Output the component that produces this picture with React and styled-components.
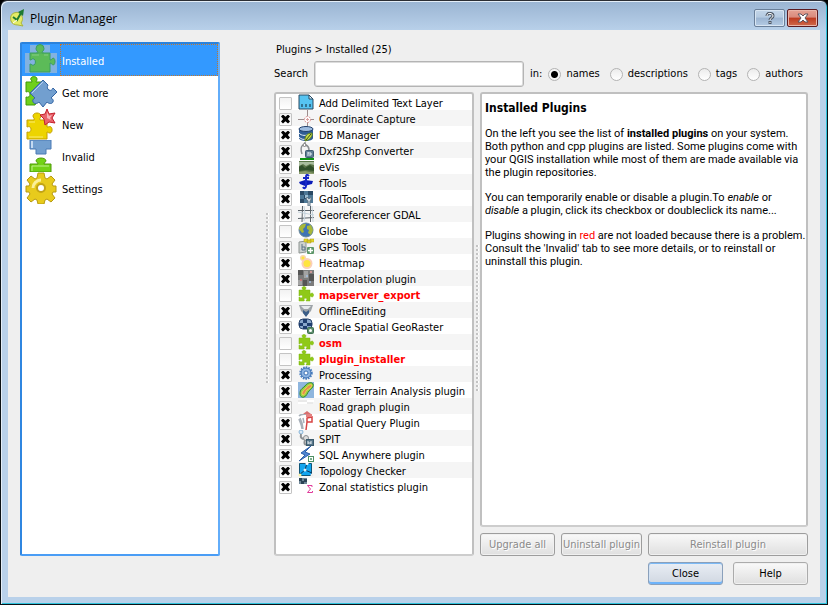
import React, { useState } from "react";
import styled, { createGlobalStyle, css } from "styled-components";

const ui = `"DejaVu Sans Condensed", "DejaVu Sans", sans-serif`;

const GlobalStyle = createGlobalStyle`
  * { box-sizing: border-box; }
  body { margin: 0; background: #000; color: #000; font: 11px/16px ${ui}; }
  button, input { font: inherit; color: inherit; }
`;

const Window = styled.div`
  min-height: 100vh;
  display: flex;
  flex-direction: column;
  padding: 0 7px 7px;
  border: 1px solid #0b1116;
  border-top-color: #2b2d33;
  border-radius: 7px 7px 0 0;
  background: linear-gradient(#9ab4d2, #b9d1ea 30px);
  box-shadow: inset 1px 1px 0 #e4eef8, inset -1px -1px 0 #2fc3dc;
`;

const TitleBar = styled.header`
  height: 29px;
  display: flex;
  align-items: center;
  gap: 5px;
  padding: 5px 2px 0 1px;
`;

const Title = styled.h1`
  flex: 1;
  margin: 0;
  padding-top: 2px;
  font: 12px/18px "Open Sans", sans-serif;
`;

const CaptionButton = styled.button`
  width: 31px;
  height: 18px;
  margin-left: -3px;
  padding: 0;
  display: grid;
  place-items: center;
  border: 1px solid ${(p) => (p.$danger ? "#5b1a20" : "#6a7f99")};
  border-radius: 2px;
  background: ${(p) =>
    p.$danger
      ? "linear-gradient(#e5a294, #d98a7c 45%, #bd3a20 50%, #cf6a4c)"
      : "linear-gradient(#c3d5e8, #b5cae1 45%, #9bb4d1 50%, #b4cbe4)"};
  box-shadow: inset 0 0 0 1px ${(p) => (p.$danger ? "#eab5a9" : "#d8e5f2")};
`;

const Client = styled.main`
  flex: 1;
  display: flex;
  padding: 12px;
  background: #efefef;
`;

const Sidebar = styled.nav`
  flex: 0 0 200px;
  margin-bottom: 29px;
  border: 2px solid #4a9df5;
  border-top-color: #2a82dc;
  border-left-color: #2f86e0;
  border-right-color: #62adfa;
  border-radius: 2px;
  background: #fff;
`;

const SidebarItem = styled.button`
  width: 100%;
  height: 32px;
  display: flex;
  align-items: center;
  gap: 3px;
  padding: 0 0 0 3px;
  border: 0;
  background: none;
  text-align: left;
  svg { flex: none; }
  ${(p) =>
    p.$active &&
    css`
      background: #3399ff;
      color: #fff;
    `}
`;

const SidebarLabel = styled.span`
  align-self: stretch;
  flex: 1;
  display: flex;
  align-items: center;
  padding: 4px 1px 0;
  border: 1px dotted ${(p) => (p.$active ? "#c2772c" : "transparent")};
`;

const Splitter = styled.div`
  flex: 0 0 ${(p) => p.$size}px;
  align-self: center;
  height: ${(p) => p.$length}px;
  margin-bottom: ${(p) => p.$below}px;
  padding-left: ${(p) => p.$inset}px;
  &::before {
    content: "";
    display: block;
    width: 3px;
    height: 100%;
    background: repeating-linear-gradient(transparent 0 2px, #efefef 2px 4px),
      linear-gradient(90deg, #c3c3c3 0 2px, #fff 2px 3px);
  }
`;

const Content = styled.section`
  flex: 1;
  min-width: 0;
  display: flex;
  flex-direction: column;
`;

const Breadcrumb = styled.h2`
  margin: 0;
  padding: 0 2px;
  font: 11px/16px ${ui};
`;

const SearchRow = styled.div`
  display: flex;
  align-items: center;
  gap: 6px;
  margin: 3px 0 5px;
  padding-right: 5px;
`;

const SearchInput = styled.input`
  flex: 1;
  min-width: 0;
  height: 26px;
  padding: 0 6px;
  border: 1px solid #b4b4b4;
  border-radius: 3px;
  background: #fff;
  box-shadow: inset 0 0 0 1px #dcdcdc;
`;

const RadioGroup = styled.fieldset`
  display: flex;
  align-items: center;
  gap: 10px;
  margin: 0;
  padding: 0;
  border: 0;
`;

const RadioLabel = styled.label`
  display: flex;
  align-items: center;
  gap: 5px;
`;

const Radio = styled.input`
  appearance: none;
  width: 13px;
  height: 13px;
  margin: 0;
  border: 1px solid #b3b3b3;
  border-radius: 50%;
  background: linear-gradient(#ececec, #fff);
  &:checked {
    background: radial-gradient(circle, #000 0 3px, #f6f6f6 4px);
  }
`;

const Panes = styled.div`
  flex: 1;
  display: flex;
`;

const frame = css`
  border: 2px solid #c0c0c0;
  border-bottom-color: #cdcdcd;
  border-radius: 3px;
  background: #fff;
`;

const PluginList = styled.ul`
  ${frame}
  flex: 0 0 200px;
  margin: 0;
  padding: 0;
  list-style: none;
`;

const PluginRow = styled.li`
  height: 16px;
  display: flex;
  align-items: center;
  &:nth-child(even) { background: #f5f5f5; }
`;

const PluginLabel = styled.label`
  height: 16px;
  display: flex;
  align-items: center;
  gap: 5px;
  padding-left: 3px;
  white-space: nowrap;
  svg { flex: none; margin-left: 1px; }
  ${(p) =>
    p.$broken &&
    css`
      color: #f00;
      font-weight: bold;
    `}
`;

const PluginName = styled.span`
  padding-top: 3px;
`;

const CheckBox = styled.input`
  appearance: none;
  width: 13px;
  height: 13px;
  margin: 2px 0 0;
  display: grid;
  place-items: center;
  border: 1px solid #c4c4c4;
  border-radius: 1px;
  background: linear-gradient(#f2f2f2, #fff);
  &:checked::before {
    content: "";
    width: 9px;
    height: 9px;
    background: #000;
    clip-path: polygon(0 22%, 22% 0, 50% 24%, 78% 0, 100% 22%, 76% 50%, 100% 78%, 78% 100%, 50% 76%, 22% 100%, 0 78%, 24% 50%);
  }
`;

const Side = styled.div`
  flex: 1;
  min-width: 0;
  display: flex;
  flex-direction: column;
  gap: 6px;
`;

const Description = styled.article`
  ${frame}
  flex: 1;
  padding: 0 0 0 3px;
  font: 11px/13px Roboto, sans-serif;
`;

const Heading = styled.h3`
  margin: 6px 0 11px;
  font: bold 12px/16px ${ui};
`;

const Paragraph = styled.p`
  margin: 0 0 12px;
`;

const Red = styled.span`
  color: #f00;
`;

const Actions = styled.div`
  display: flex;
  gap: 6px;
`;

const Button = styled.button`
  flex: ${(p) => (p.$wide ? "1" : `0 0 ${p.$width}px`)};
  height: 23px;
  padding: 0;
  border: 1px solid ${(p) => (p.$primary ? "#8aa0bb" : "#ababab")};
  border-radius: 3px;
  background: linear-gradient(#f9f9f9, #dfdfdf);
  box-shadow: inset 0 0 0 1px #f0f0f0;
  white-space: nowrap;
  ${(p) =>
    p.$primary &&
    css`
      background: linear-gradient(#e9eef5, #d0d7e1);
      box-shadow: inset 0 1px 0 #7cbaf6, inset 0 -2px 0 #6db3fa, inset 1px 0 0 #d3e2f3;
    `}
  &:disabled {
    color: #8a8a8a;
    border-color: #9d9d9d;
    text-shadow: 1px 1px 0 #fff;
  }
`;

const Footer = styled.footer`
  display: flex;
  justify-content: flex-end;
  gap: 10px;
  margin-top: 6px;
`;

/* ---------- icons ---------- */

const Big = ({ children }) => (
  <svg width="32" height="32" viewBox="0 0 32 32" aria-hidden="true">{children}</svg>
);

const InstalledIcon = () => (
  <Big>
    <path d="M5 1h20v28H5z M0 9h5v20H0z M25 9h7v20h-7z" fill="#82b2e0" />
    <path d="M5 9h8c0-2-2-2-2-4.500a4 4 0 0 1 8 0c0 2.500-2 2.500-2 4.500h8v7c2 0 2-2 3.500-2a3 4 0 0 1 0 7c-1.500 0-2-2-3.500-2v9H5v-8c2 0 2 2 4 1a3 3.500 0 0 0 0-6c-2-1-2 1-4 1z" fill="#5cbb58" stroke="#3a9c62" />
    <path d="M7 11h7m5 0h4" stroke="#84cc84" />
    <path d="M11 9h8" stroke="#4ba95c" />
  </Big>
);

const GetMoreIcon = () => (
  <Big>
    <path d="M1 6h6C7 4 5 4 6 2c1-2 6-2 6 1 0 2-1 2-1 3h7v7l-8 16H1v-8c3 1 4-1 4-3s-2-3-4-2z" fill="#6fd01a" stroke="#3f9a08" />
    <path d="M18 4l5 5c-1 2-1 4 1 5s3 0 4-2l4 4-6 6c1 1 3 1 2 4-1 2-4 2-6 0l-4 5-4-5c-2 2-5 2-6 0-1-3 1-3 2-4l-5-5z" fill="#729fcf" stroke="#3465a4" />
    <path d="M18 6L7 17" stroke="#b9d2ef" />
  </Big>
);

const NewIcon = () => (
  <Big>
    <path d="M2 12h7c1-2-1-2-1-4 0-4 8-4 8 0 0 2-2 2-1 4h7v7c2 0 3-1 4 0 2 2 1 6-1 6s-2-1-3-1v7H2v-7c3 1 4-1 4-3s-2-3-4-2z" fill="#edd400" stroke="#c4a000" />
    <path d="M4 14h6m-6 15h14" stroke="#fbeb72" />
    <path d="M22 1l2 5 6-1-3 5 3 5-6-1-4 3-1-6-4-4 5-1z" fill="#e9646c" stroke="#c4202c" />
    <path d="M22 4l2 4 3-1-2 3 1 2-4-2z" fill="#f8b4b8" />
  </Big>
);

const InvalidIcon = () => (
  <Big>
    <path d="M5 0h21v9h-5v5H11V9H5z" fill="#729fcf" stroke="#4a7ab5" />
    <path d="M6 8V1h2v7z" fill="#c4daf2" />
    <path d="M5 32v-8h8c0-2-2-2-2-3 0-4 10-4 10 0 0 1-2 1-2 3h7v8z" fill="#73d216" stroke="#4e9a06" />
    <path d="M7 31v-5h17" fill="none" stroke="#c0f08c" />
  </Big>
);

const SettingsIcon = () => (
  <Big>
    <path d="M13 1h6l1 5 2 1 4-3 4 4-3 4 1 2 3 0v6h-3l-1 2 3 4-4 4-4-3-2 1-1 4h-6l-1-4-2-1-4 3-4-4 3-4-1-2H1v-6h3l1-2-3-4 4-4 4 3 2-1z" fill="#e8cb1c" stroke="#b79a12" strokeLinejoin="round" />
    <path d="M8 16a8 8 0 0 1 8-8" fill="none" stroke="#faf09a" strokeWidth="3" />
    <circle cx="16" cy="16" r="4" fill="#fff" stroke="#c2a416" strokeWidth="2" />
  </Big>
);

const Small = ({ children }) => (
  <svg width="16" height="16" viewBox="0 0 16 16" aria-hidden="true">{children}</svg>
);

const icons = {
  delimited: (
    <Small>
      <path d="M1 1h10l4 4v10H1z" fill="#56c4f2" stroke="#2b4a63" />
      <path d="M11 1v4h4z" fill="#d6effa" stroke="#2b4a63" />
      <path d="M4 10v3m4-3v3m4-3v3" stroke="#123" />
    </Small>
  ),
  coordinate: (
    <Small>
      <path d="M9.500 0v6m0 6v4M0 9.500h6m6 0h4" stroke="#9d8d8d" />
      <circle cx="9.500" cy="9.500" r="3" fill="#fff" stroke="#d68989" strokeDasharray="2 1" />
      <path d="M8 9.500h3M9.500 8v3" stroke="#d9a0a0" />
    </Small>
  ),
  db: (
    <Small>
      <path d="M1 3v9c0 4 14 4 14 0V3z" fill="#2f5c94" />
      <ellipse cx="8" cy="3" rx="7" ry="2.500" fill="#9dbce0" stroke="#23406b" />
      <path d="M1 7c2 3 8 3 10 1M1 11c2 2 4 3 7 2" fill="none" stroke="#e3ecf6" />
      <path d="M7 14c0-4 2-7 7-7 1 3-2 7-7 8z" fill="#c7dc4a" stroke="#5c7d1c" />
      <path d="M8 14l5-6" stroke="#374b12" />
    </Small>
  ),
  dxf: (
    <Small>
      <path d="M7 0v3M5 3C2 5 3 9 4 12M8 3c2 1 3 3 3 5" fill="none" stroke="#8b8f92" strokeWidth="1.500" />
      <circle cx="6.500" cy="3" r="1.500" fill="#fff" stroke="#777" />
      <rect x="7.500" y="8.500" width="8" height="7" rx="1" fill="#5f7e94" stroke="#3f5c70" />
      <path d="M10 10v4m0-3h3v2h-2" fill="none" stroke="#e8f0f4" />
    </Small>
  ),
  evis: (
    <Small>
      <path d="M1 3h15v13H1z" fill="#5b7549" />
      <path d="M2 0h14v2H2z" fill="#0d9413" />
      <path d="M1 4h15v3l-4-1-4 2-3-2-4 2z" fill="#a9bd9e" />
      <path d="M1 9l3-2 3 3 5-3 4 3v3L8 12l-7 1z" fill="#31502b" />
      <path d="M1 14l6-1 9 2v1H1z" fill="#8a9c6d" />
    </Small>
  ),
  ftools: (
    <Small>
      <path d="M1 8l6-2 8 1-1 3-4 1-3 1-5-2z" fill="#0a1bb8" />
      <path d="M11 2c-2-2-3-1-3 1v9c0 2-2 3-3 1M5 4h6" fill="none" stroke="#1728c8" strokeWidth="2" />
    </Small>
  ),
  gdal: (
    <Small>
      <path d="M2 1h13v12H2z" fill="#4d7896" />
      <path d="M2 1h4v4H2zM10 1h5v4h-5zM6 5h4v4H6zM2 9h4v4H2z" fill="#2b4b66" />
      <path d="M7 5h3v3H7z" fill="#9dbfd3" />
      <path d="M9 7l2 2 2-2v3l-1 1v5h-2v-5l-2-2z" fill="#c8d4dc" stroke="#63798a" />
    </Small>
  ),
  georef: (
    <Small>
      <path d="M4.500 0L4 16M12.500 0v16M0 4.500h16M0 12.500l16-1" fill="none" stroke="#5a6268" />
      <path d="M14 0l1 16M6 0l1 8-1 7M0 6l16 3" fill="none" stroke="#c3d2dc" />
    </Small>
  ),
  globe: (
    <Small>
      <circle cx="8" cy="8" r="7" fill="#3f73b4" stroke="#6d8a98" />
      <path d="M1 6c2-4 4-4 7-4L7 5 5 7l1 3-2 1-3-4zM9 4l4-1 2 5-2 5-3-2 1-3-2-1z" fill="#a8b838" />
    </Small>
  ),
  gps: (
    <Small>
      <path d="M1 4l7-1v11l-7 1z" fill="#ccd1cf" stroke="#8e9592" />
      <path d="M4 6v6h3V9H4" fill="none" stroke="#5b7385" />
      <path d="M6 1h4v3H6zM12 1h4v3h-4zM9 2h4v3H9z" fill="#e5d829" stroke="#a89a1c" strokeWidth="0.500" />
      <rect x="9" y="9" width="7" height="7" rx="1" fill="#5c9669" />
      <path d="M12.500 10v5M10 12.500h5" stroke="#fff" strokeWidth="1.500" />
    </Small>
  ),
  heatmap: (
    <Small>
      <circle cx="5" cy="4" r="3" fill="#fbd5a8" />
      <circle cx="9" cy="9.500" r="5.500" fill="#fbcfb8" />
      <circle cx="5" cy="4" r="1.500" fill="#fde43a" />
      <circle cx="9" cy="9.500" r="3.500" fill="#fee53e" />
    </Small>
  ),
  interpolation: (
    <Small>
      <path d="M0 0h16v16H0z" fill="#7c7c7c" />
      <path d="M0 0h5v5H0zM11 4h5v7h-5zM5 10h4v6H5z" fill="#555" />
      <path d="M6 1h4v7H6zM0 10h4v5H0z" fill="#a3a3a3" />
      <circle cx="3" cy="10" r="1" fill="#d87070" />
      <circle cx="13" cy="2" r="1" fill="#e7a0a0" />
      <circle cx="9" cy="6" r="1" fill="#a4c0e0" />
      <circle cx="12" cy="12" r="1" fill="#a4c0e0" />
    </Small>
  ),
  piece: (
    <Small>
      <path d="M1 4h4C5 3 4 3 4 2c0-2 4-2 4 0 0 1-1 1-1 2h5v4c1 0 1-1 2-1 2 0 2 4 0 4-1 0-1-1-2-1v5H8c0-1 1-1 1-2s-3-1-3 0 1 1 0 2H1v-4c1 0 1 1 2 1 2 0 2-3 0-3-1 0-1 1-2 1z" fill="#8fc918" stroke="#7ab70d" strokeWidth="0.500" />
    </Small>
  ),
  offline: (
    <Small>
      <path d="M1 3h14l-2 6-5 5-5-5z" fill="#9da3a8" />
      <path d="M3 4h10l-3 3H6z" fill="#e6e9eb" />
      <path d="M5 8l3 2 3-2v3l-3 4-3-4z" fill="#3b5e88" />
    </Small>
  ),
  oracle: (
    <Small>
      <rect x="1" y="1" width="13" height="10" rx="4" fill="#8aa7cb" stroke="#27436b" />
      <path d="M5 1h4v4H5zM1 5h4v3H1zM9 5h5v3H9zM5 8h4v3H5z" fill="#1e3d6e" />
      <rect x="9.500" y="9.500" width="6" height="6" rx="1" fill="#5c8d6b" stroke="#3e6e50" />
      <circle cx="12.500" cy="12.500" r="1.500" fill="#fff" />
    </Small>
  ),
  processing: (
    <Small>
      <circle cx="8" cy="7" r="5.500" fill="none" stroke="#4b7fc0" strokeWidth="2.500" strokeDasharray="1.500 1" />
      <circle cx="8" cy="7" r="5" fill="#8db4e2" stroke="#3c70b2" />
      <circle cx="8" cy="7" r="2" fill="#fff" stroke="#3c70b2" />
    </Small>
  ),
  raster: (
    <Small>
      <path d="M0 0h16v16H0z" fill="#8fb6de" />
      <path d="M2 12c0-5 2-5 5-8 3-4 7-4 8-2 1 3-2 5-4 7s-2 5-5 6c-2 1-4-1-4-3z" fill="#9bcf47" stroke="#2f8c2a" />
      <path d="M4 12c0-3 2-4 4-6 2-3 5-4 6-3 0 2-3 4-5 5-2 2-2 5-4 5z" fill="#e58b52" stroke="#ead34a" />
    </Small>
  ),
  road: (
    <Small>
      <path d="M0 4h9V2h7v2H9v2H0z" fill="#fff" />
      <path d="M0 3h9M9 5h6" stroke="#dedede" />
      <path d="M5 16l4-3 4 3z" fill="#d66f6f" />
    </Small>
  ),
  spatial: (
    <Small>
      <path d="M1 2c3-3 5-1 9-2M2 4l2 5 1 6M5 4l1 5M1 5c1 4 3 6 3 10" fill="none" stroke="#a7afb8" strokeWidth="1.500" />
      <path d="M9 4l5-1v5H9zM9 8l-1 8" fill="none" stroke="#d84444" strokeWidth="1.500" />
      <path d="M8 0h6v3H8z" fill="#e48080" />
    </Small>
  ),
  spit: (
    <Small>
      <circle cx="3" cy="2" r="2" fill="#dbe9f5" stroke="#86b4d8" />
      <path d="M3 4c-1 4 1 5 4 5 0 3-2 4 1 6" fill="none" stroke="#8c9093" strokeWidth="2" />
      <circle cx="8" cy="8" r="2.500" fill="#ddd" stroke="#8c9093" />
      <rect x="8.500" y="9.500" width="7" height="6" fill="#58778b" stroke="#3b5a6c" />
      <path d="M10 11v3m3-3v3m-3-1h3" stroke="#e7eff3" />
    </Small>
  ),
  sql: (
    <Small>
      <path d="M13 0L3 7l4 2-6 6 11-7-5-2z" fill="#4f86d4" stroke="#2d5fa8" />
      <rect x="10.500" y="10.500" width="5" height="5" fill="#fff" stroke="#4d9064" />
      <path d="M13 12v2m-1-1h2" stroke="#4d9064" />
    </Small>
  ),
  topology: (
    <Small>
      <path d="M1.500 1.500h12v12h-12z" fill="#12a5ef" stroke="#157" />
      <path d="M9 1L7 8l-6 5m6-5l7 3" fill="none" stroke="#0d3557" />
      <circle cx="9" cy="1.500" r="1.500" fill="#fff" />
      <circle cx="7" cy="8" r="1.500" fill="#d8f0fb" />
      <circle cx="2" cy="13" r="1.500" fill="#f7f0a0" />
      <circle cx="14" cy="13" r="1.500" fill="#eee" />
    </Small>
  ),
  zonal: (
    <Small>
      <path d="M1 0h8v6H1z" fill="#6f8797" />
      <path d="M1 0h3v3H1zM6 1h3v3H6zM3 3h3v3H3z" fill="#2b4355" />
      <path d="M14 9V7.500H9.500l3 3.500-3 3.500h5V13" fill="none" stroke="#e03a9a" />
    </Small>
  ),
};

const AppIcon = () => (
  <svg width="16" height="18" viewBox="0 0 16 18" aria-hidden="true">
    <path d="M5 4C2 5 1 8 2 12c1 3 4 4 7 4l5 1-2-3c2-3 2-6 0-8-2-3-4-3-7-2z" fill="#e4ec66" stroke="#a9b43c" />
    <path d="M4 8l4 3 4-7" fill="none" stroke="#1f7a30" strokeWidth="2" />
    <path d="M9 3l6-3-1 7z" fill="#1f7a30" />
    <path d="M4 14l4-3" stroke="#fff" />
  </svg>
);

const HelpGlyph = () => (
  <svg width="12" height="12" viewBox="0 0 12 12" aria-hidden="true">
    <path d="M3 4c0-4 6-3 6 0 0 2-3 2-3 4M6 9v3" fill="none" stroke="#4d5765" strokeWidth="3" />
    <path d="M3 4c0-4 6-3 6 0 0 2-3 2-3 4M6 10v1" fill="none" stroke="#fff" strokeWidth="1" />
  </svg>
);

const CloseGlyph = () => (
  <svg width="12" height="10" viewBox="0 0 12 10" aria-hidden="true">
    <path d="M1 1h3l2 2 2-2h3L8 5l3 4H8L6 7 4 9H1l3-4z" fill="#fff" stroke="#5c5560" />
  </svg>
);

/* ---------- data ---------- */

const tabs = [
  ["Installed", InstalledIcon],
  ["Get more", GetMoreIcon],
  ["New", NewIcon],
  ["Invalid", InvalidIcon],
  ["Settings", SettingsIcon],
];

const plugins = [
  { name: "Add Delimited Text Layer", icon: "delimited", off: true },
  { name: "Coordinate Capture", icon: "coordinate" },
  { name: "DB Manager", icon: "db" },
  { name: "Dxf2Shp Converter", icon: "dxf" },
  { name: "eVis", icon: "evis" },
  { name: "fTools", icon: "ftools" },
  { name: "GdalTools", icon: "gdal" },
  { name: "Georeferencer GDAL", icon: "georef" },
  { name: "Globe", icon: "globe", off: true },
  { name: "GPS Tools", icon: "gps" },
  { name: "Heatmap", icon: "heatmap" },
  { name: "Interpolation plugin", icon: "interpolation" },
  { name: "mapserver_export", icon: "piece", off: true, broken: true },
  { name: "OfflineEditing", icon: "offline" },
  { name: "Oracle Spatial GeoRaster", icon: "oracle" },
  { name: "osm", icon: "piece", off: true, broken: true },
  { name: "plugin_installer", icon: "piece", off: true, broken: true },
  { name: "Processing", icon: "processing" },
  { name: "Raster Terrain Analysis plugin", icon: "raster" },
  { name: "Road graph plugin", icon: "road" },
  { name: "Spatial Query Plugin", icon: "spatial" },
  { name: "SPIT", icon: "spit" },
  { name: "SQL Anywhere plugin", icon: "sql" },
  { name: "Topology Checker", icon: "topology" },
  { name: "Zonal statistics plugin", icon: "zonal" },
];

const fields = ["names", "descriptions", "tags", "authors"];

export default function App() {
  const [tab, setTab] = useState("Installed");

  return (
    <>
      <GlobalStyle />
      <Window>
        <TitleBar>
          <AppIcon />
          <Title>Plugin Manager</Title>
          <CaptionButton aria-label="What's this?"><HelpGlyph /></CaptionButton>
          <CaptionButton $danger aria-label="Close window"><CloseGlyph /></CaptionButton>
        </TitleBar>
        <Client>
          <Sidebar>
            {tabs.map(([name, Icon]) => (
              <SidebarItem key={name} $active={tab === name} onClick={() => setTab(name)}>
                <Icon />
                <SidebarLabel $active={tab === name}>{name}</SidebarLabel>
              </SidebarItem>
            ))}
          </Sidebar>
          <Splitter $size={54} $inset={46} $length={170} $below={32} />
          <Content>
            <Breadcrumb>Plugins &gt; Installed (25)</Breadcrumb>
            <SearchRow>
              <label htmlFor="search">Search</label>
              <SearchInput id="search" type="text" />
              <span>in:</span>
              <RadioGroup aria-label="Search in">
                {fields.map((field) => (
                  <RadioLabel key={field}>
                    <Radio type="radio" name="field" defaultChecked={field === "names"} />
                    {field}
                  </RadioLabel>
                ))}
              </RadioGroup>
            </SearchRow>
            <Panes>
              <PluginList>
                {plugins.map((p) => (
                  <PluginRow key={p.name}>
                    <PluginLabel $broken={p.broken}>
                      <CheckBox type="checkbox" defaultChecked={!p.off} />
                      {icons[p.icon]}
                      <PluginName>{p.name}</PluginName>
                    </PluginLabel>
                  </PluginRow>
                ))}
              </PluginList>
              <Splitter $size={6} $inset={2} $length={148} $below={10} />
              <Side>
                <Description>
                  <Heading>Installed Plugins</Heading>
                  <Paragraph>
                    On the left you see the list of <b>installed plugins</b> on your system.
                    <br />
                    Both python and cpp plugins are listed. Some plugins come with
                    <br />
                    your QGIS installation while most of them are made available via
                    <br />
                    the plugin repositories.
                  </Paragraph>
                  <Paragraph>
                    You can temporarily enable or disable a plugin.To <i>enable</i> or
                    <br />
                    <i>disable</i> a plugin, click its checkbox or doubleclick its name...
                  </Paragraph>
                  <Paragraph>
                    Plugins showing in <Red>red</Red> are not loaded because there is a problem.
                    <br />
                    Consult the 'Invalid' tab to see more details, or to reinstall or
                    <br />
                    uninstall this plugin.
                  </Paragraph>
                </Description>
                <Actions>
                  <Button $width={75} disabled>Upgrade all</Button>
                  <Button $width={81} disabled>Uninstall plugin</Button>
                  <Button $wide disabled>Reinstall plugin</Button>
                </Actions>
              </Side>
            </Panes>
            <Footer>
              <Button $width={75} $primary>Close</Button>
              <Button $width={75}>Help</Button>
            </Footer>
          </Content>
        </Client>
      </Window>
    </>
  );
}
